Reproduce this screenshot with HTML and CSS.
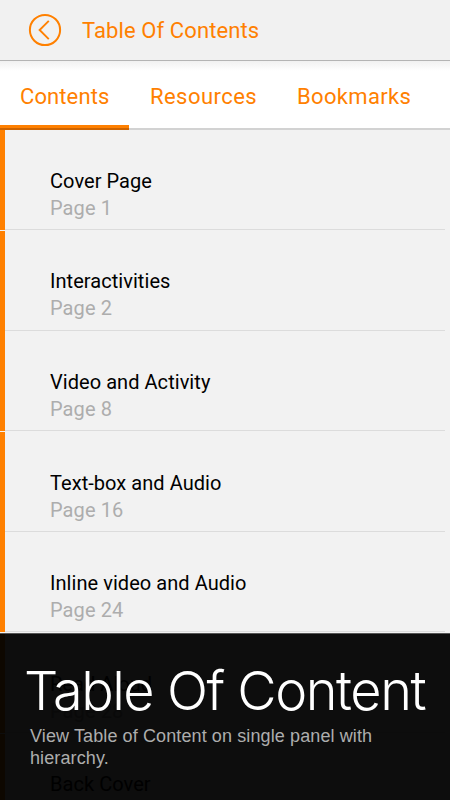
FILE: index.html
```html
<!DOCTYPE html>
<html lang="en">
<head>
    <meta charset="UTF-8">
    <meta name="viewport" content="width=device-width, initial-scale=1.0">
    <title>Table Of Contents</title>
    <link rel="stylesheet" href="styles.css">
</head>
<body>
    <header class="topbar">
        <svg class="back" width="34" height="34" viewBox="0 0 34 34" fill="none" stroke="#ff8000">
            <circle cx="17" cy="17" r="15.1" stroke-width="2"/>
            <path d="M20.8 7.8L11.6 17L20.8 26.2" stroke-width="1.9"/>
        </svg>
        <h1>Table Of Contents</h1>
    </header>

    <nav class="tabs">
        <a class="tab contents active">Contents</a>
        <a class="tab resources">Resources</a>
        <a class="tab bookmarks">Bookmarks</a>
    </nav>

    <ul class="list">
        <li><h2>Cover Page</h2><p>Page 1</p></li>
        <li><h2>Interactivities</h2><p>Page 2</p></li>
        <li><h2>Video and Activity</h2><p>Page 8</p></li>
        <li><h2>Text-box and Audio</h2><p>Page 16</p></li>
        <li><h2>Inline video and Audio</h2><p>Page 24</p></li>
        <li><h2>Read Aloud</h2><p>Page 28</p></li>
        <li><h2>Back Cover</h2></li>
    </ul>

    <div class="caption">
        <div class="caption-title">Table Of Content</div>
        <p>View Table of Content on single panel with hierarchy.</p>
    </div>
</body>
</html>
```
FILE: styles.css
```css
* {
    box-sizing: border-box;
    margin: 0;
    padding: 0;
}

body {
    height: 800px;
    overflow: hidden;
    position: relative;
    background: #f2f2f2;
    font-family: Roboto, "Liberation Sans", sans-serif;
}

.topbar {
    display: flex;
    align-items: center;
    height: 61px;
    padding-left: 28px;
    border-bottom: 1px solid #b4b4b4;
    background: #f1f1f1;
    color: #ff8000;
}

.topbar h1 {
    margin-left: 20px;
    padding-top: 1px;
    font-size: 22px;
    font-weight: 400;
    letter-spacing: 0.1px;
}

.tabs {
    display: flex;
    height: 69px;
    background: linear-gradient(#f1f1f1, #fff 10px);
    border-bottom: 2px solid #d2d2d2;
}

.tab {
    height: 69px;
    line-height: 71px;
    font-size: 22px;
    letter-spacing: 0.1px;
    color: #ff8000;
}

.contents {
    width: 129px;
    padding-left: 20px;
}

.resources {
    width: 147px;
    padding-left: 21px;
    letter-spacing: 0.45px;
}

.bookmarks {
    padding-left: 21px;
    letter-spacing: 0.35px;
}

.active {
    background: linear-gradient(#ff8000 3px, #cf6400 3px) bottom / 100% 5px no-repeat;
}

.list {
    list-style: none;
}

.list li {
    height: 100.6px;
    padding: 37.8px 0 0 50px;
    background:
        linear-gradient(#dcdcdc, #dcdcdc) 5px 99px / 440px 1px no-repeat,
        linear-gradient(#ff8000, #ff8000) 0 0 / 5px 100px no-repeat;
}

.list h2 {
    font-size: 20px;
    font-weight: 400;
    line-height: 27px;
    letter-spacing: 0.05px;
    color: #000;
}

.list p {
    font-size: 20px;
    line-height: 27px;
    letter-spacing: 0.1px;
    color: #adadad;
}

/* caption lies over the lower rows of the list */
.caption {
    position: absolute;
    left: 0;
    top: 633px;
    width: 450px;
    height: 167px;
    padding: 24px 0 0 24px;
    background: rgba(0, 0, 0, 0.95);
    border-top: 1px solid #555;
}

.caption-title {
    font-family: Inter, "Liberation Sans", sans-serif;
    font-size: 54px;
    font-weight: 300;
    line-height: 65px;
    letter-spacing: -1.45px;
    white-space: nowrap;
    color: #fff;
}

.caption p {
    width: 380px;
    padding: 2px 0 0 6px;
    font-family: "Liberation Sans", Arial, sans-serif;
    font-size: 18px;
    line-height: 22px;
    letter-spacing: 0.11px;
    color: #adadad;
}
```
